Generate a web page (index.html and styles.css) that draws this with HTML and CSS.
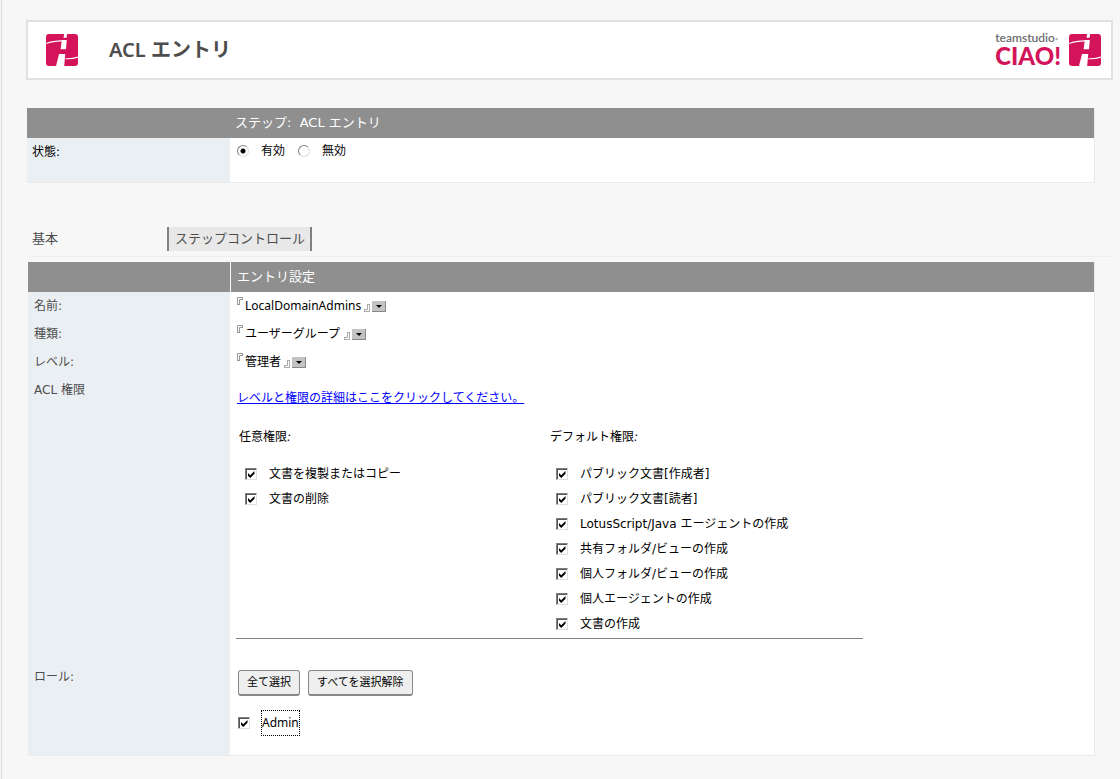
FILE: index.html
```html
<!DOCTYPE html>
<html lang="ja">
<head>
<meta charset="utf-8">
<title>ACL エントリ</title>
<link rel="stylesheet" href="styles.css">
</head>
<body>
<svg class="defs" width="0" height="0" aria-hidden="true">
  <symbol id="road" viewBox="0 0 32 32">
    <rect width="32" height="32" rx="3" fill="#d4145a"/>
    <path d="M18.200 0h3l-.7 3.800h-3zM15.800 6h5l-.8 9.200h-5.400zM13 20h6.200L18.200 32H10z" fill="#fff"/>
    <path d="M0 9.600C5 7.600 10 6.900 16 6.900M19.500 24.700c5 .2 9-.4 12.500-1.600" fill="none" stroke="#fff" stroke-width="1.100"/>
  </symbol>
  <symbol id="open" viewBox="0 0 6 8">
    <path d="M.5 8V.5H6M2.500 8V2.500H6M.5 7.500h2M5.500.5v2" fill="none" stroke="#999" stroke-width="1"/>
  </symbol>
  <symbol id="close" viewBox="0 0 6 8">
    <path d="M5.500 0v7.500H0M3.500 0v5.500H0M3.500.5h2M.5 5.500v2" fill="none" stroke="#aaa" stroke-width="1"/>
  </symbol>
  <symbol id="drop" viewBox="0 0 14 11">
    <rect width="14" height="11" fill="#c3c3c3"/>
    <path d="M0 10.500h13.500V0" fill="none" stroke="#888"/>
    <path d="M4 4h6L7 7z" fill="#000"/>
  </symbol>
</svg>

<main class="page">
  <header class="banner">
    <svg class="banner-icon"><use href="#road"/></svg>
    <h1 class="banner-title">ACL エントリ</h1>
    <div class="brand">
      <div class="brand-text">
        <span class="brand-top">teamstudio<span class="brand-mark">·</span></span>
        <span class="brand-name">CIAO!</span>
      </div>
      <svg class="banner-icon"><use href="#road"/></svg>
    </div>
  </header>

  <section class="panel step">
    <div class="head"></div>
    <h2 class="head">ステップ:&nbsp; ACL エントリ</h2>
    <div class="label strong" id="state">状態:</div>
    <div class="cell radios" role="radiogroup" aria-labelledby="state">
      <label class="option"><input class="radio" type="radio" name="state" checked>有効</label>
      <label class="option"><input class="radio" type="radio" name="state">無効</label>
    </div>
  </section>

  <nav class="tabs">
    <button class="tab current" type="button">基本</button>
    <button class="tab raised" type="button">ステップコントロール</button>
  </nav>

  <section class="panel entry">
    <div class="head"></div>
    <h2 class="head">エントリ設定</h2>

    <label class="label" for="name">名前:</label>
    <div class="cell"><span class="field"><svg class="open"><use href="#open"/></svg><select class="select" id="name"><option>LocalDomainAdmins</option></select><svg class="close"><use href="#close"/></svg><svg class="drop"><use href="#drop"/></svg></span></div>

    <label class="label" for="kind">種類:</label>
    <div class="cell"><span class="field"><svg class="open"><use href="#open"/></svg><select class="select" id="kind"><option>ユーザーグループ</option></select><svg class="close"><use href="#close"/></svg><svg class="drop"><use href="#drop"/></svg></span></div>

    <label class="label" for="level">レベル:</label>
    <div class="cell"><span class="field"><svg class="open"><use href="#open"/></svg><select class="select" id="level"><option>管理者</option></select><svg class="close"><use href="#close"/></svg><svg class="drop"><use href="#drop"/></svg></span></div>

    <div class="label">ACL 権限</div>
    <div class="cell rights">
      <a class="help" href="#">レベルと権限の詳細はここをクリックしてください。</a>
      <div class="columns">
        <div class="column">
          <h3 class="group">任意権限<i>:</i></h3>
          <label class="check"><input class="box" type="checkbox" checked>文書を複製またはコピー</label>
          <label class="check"><input class="box" type="checkbox" checked>文書の削除</label>
        </div>
        <div class="column">
          <h3 class="group">デフォルト権限<i>:</i></h3>
          <label class="check"><input class="box" type="checkbox" checked>パブリック文書[作成者]</label>
          <label class="check"><input class="box" type="checkbox" checked>パブリック文書[読者]</label>
          <label class="check"><input class="box" type="checkbox" checked>LotusScript/Java エージェントの作成</label>
          <label class="check"><input class="box" type="checkbox" checked>共有フォルダ/ビューの作成</label>
          <label class="check"><input class="box" type="checkbox" checked>個人フォルダ/ビューの作成</label>
          <label class="check"><input class="box" type="checkbox" checked>個人エージェントの作成</label>
          <label class="check"><input class="box" type="checkbox" checked>文書の作成</label>
        </div>
      </div>
    </div>

    <div class="label">ロール:</div>
    <div class="cell roles">
      <div class="buttons">
        <button class="button" type="button">全て選択</button>
        <button class="button" type="button">すべてを選択解除</button>
      </div>
      <label class="role"><input class="box" type="checkbox" checked><span class="focused">Admin</span></label>
    </div>
  </section>
</main>
</body>
</html>
```
FILE: styles.css
```css
* { box-sizing: border-box; }

body {
  margin: 0;
  background: #f7f7f7;
  color: #000;
  font: 12px/20px "DejaVu Sans", "Noto Sans CJK JP", sans-serif;
}

h1, h2, h3 { margin: 0; font-weight: 400; }
.defs { position: absolute; }
svg { display: block; flex: none; }

.page {
  min-height: 100vh;
  margin-left: 1px;
  padding: 20px 7px 23px 25px;
  border-left: 1px solid #dcdcdc;
}

/* Banner */
.banner {
  display: flex;
  align-items: center;
  height: 60px;
  margin-left: -1px;
  padding: 0 10px 0 18px;
  border: 2px solid #e1e1e1;
  background: #fff;
  font-family: "Noto Sans", "Noto Sans CJK JP", sans-serif;
}
.banner-icon { width: 32px; height: 32px; }
.banner-title {
  flex: 1;
  margin-left: 31px;
  color: #4d4d4d;
  font-size: 20px;
  font-weight: 600;
  line-height: 28px;
}
.brand { display: flex; align-items: center; gap: 8px; }
.brand-text { display: flex; flex-direction: column; padding-bottom: 3px; }
.brand-top {
  color: #6d6d6d;
  font-family: Lato, sans-serif;
  font-size: 12px;
  font-weight: 600;
  line-height: 14px;
}
.brand-mark { color: #aaa; }
.brand-name {
  color: #d4145a;
  font-family: Lato, sans-serif;
  font-size: 24px;
  font-weight: 900;
  line-height: 22px;
}

/* Two-column panels */
.panel {
  display: grid;
  grid-template-columns: 203px 1fr;
  margin-right: 18px;
  border: 1px solid #ebebeb;
  border-width: 0 1px 1px 0;
  background: #fff;
}
.head {
  height: 30px;
  padding-left: 5px;
  background: #8f8f8f;
  color: #fff;
  font-size: 13px;
  line-height: 30px;
}
.label {
  padding: 4px 6px;
  background: #eaeff3;
  color: #4d4d4d;
}
.cell { padding: 4px 6px; }

.step { margin-top: 28px; }
.step .label, .step .cell { height: 44px; }
.label.strong { padding-left: 5px; color: #000; }
.radios { display: flex; gap: 13px; padding: 2px 7px; }
.option { display: flex; align-items: center; gap: 12px; height: 21px; }

/* Tabs */
.tabs {
  display: flex;
  align-items: center;
  height: 32px;
  margin-top: 42px;
  padding-bottom: 4px;
  border-bottom: 1px solid #eeeeee;
}
.tab {
  height: 26px;
  padding: 0 6px;
  border: 0;
  background: none;
  color: #4d4d4d;
  font: inherit;
  font-size: 13px;
  line-height: 24px;
}
.tab.current { width: 140px; padding-left: 5px; text-align: left; }
.tab.raised {
  height: 24px;
  padding: 0 5px 0 6px;
  border: 1px solid #808080;
  border-width: 0 2px;
  background: #e8e8e8;
}

/* Entry settings */
.entry {
  grid-template-columns: 202px 1fr;
  margin: 5px 18px 0 1px;
}
.entry h2.head { border-left: 1px solid #f7f7f7; padding-left: 6px; }

.field { position: relative; display: flex; width: max-content; }
.select {
  height: 20px;
  margin: 0;
  padding: 0 24px 0 9px;
  border: 0;
  appearance: none;
  background: none;
  color: #000;
  font: inherit;
  font-family: "Noto Sans", "Noto Sans CJK JP", sans-serif;
}
.open, .close { width: 6px; height: 8px; }
.drop { width: 14px; height: 11px; }
.open, .close, .drop { position: absolute; pointer-events: none; }
.open { left: 1px; top: 1px; }
.close { right: 16px; bottom: 4px; }
.drop { right: 0; bottom: 4px; }

.rights { padding: 12px 7px 0; }
.help { color: #00f; }
.columns {
  display: grid;
  grid-template-columns: 311px 1fr;
  width: 627px;
  margin: 19px 0 24px -1px;
  border-bottom: 1px solid #808080;
}
.column { padding-bottom: 2px; }
.group { margin: 0 0 14px 3px; font-size: 12px; line-height: 20px; }
.check { display: flex; align-items: center; gap: 12px; height: 25px; padding-left: 9px; }

.roles { padding: 7px 8px 20px; }
.buttons { display: flex; gap: 8px; }
.button {
  height: 26px;
  padding: 0 8px;
  border: 1px solid #888;
  border-bottom-width: 2px;
  border-radius: 3px;
  background: #efefef;
  color: #000;
  font: inherit;
  font-size: 11px;
}
.role {
  display: flex;
  align-items: center;
  gap: 12px;
  width: max-content;
  margin-top: 15px;
  font-family: "Noto Sans", "Noto Sans CJK JP", sans-serif;
}
.focused { outline: 1px dotted #000; line-height: 24px; }

/* Sunken tick boxes and radios */
.box {
  width: 12px;
  height: 12px;
  margin: 0;
  appearance: none;
  border: 1px solid #808080;
  border-right-color: #dedede;
  border-bottom-color: #dedede;
  background: #fff;
  box-shadow: inset 1px 1px #555;
}
.box:checked {
  background: #fff url("data:image/svg+xml,%3Csvg xmlns='http://www.w3.org/2000/svg' viewBox='0 0 10 10'%3E%3Cpath d='M2 4l2.200 2.200L8.500 2v2.700L4.200 9 2 6.800z'/%3E%3C/svg%3E") center / 10px 10px;
}
.radio {
  width: 12px;
  height: 12px;
  margin: 0;
  appearance: none;
  border: 1px solid #808080;
  border-right-color: #dedede;
  border-bottom-color: #dedede;
  border-radius: 50%;
  background: #fff;
}
.radio:checked { background: radial-gradient(circle, #000 2px, #fff 3px); }
```
